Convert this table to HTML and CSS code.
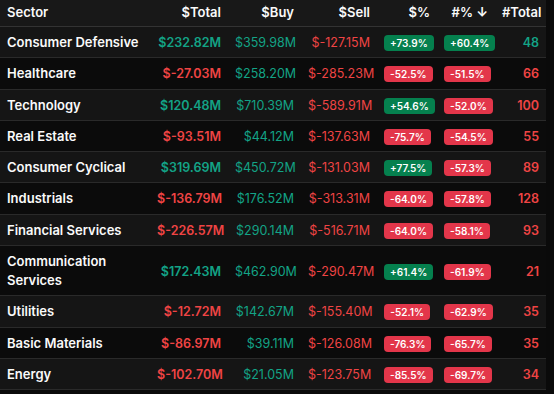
FILE: index.html
```html
<!DOCTYPE html>
<html lang="en">
<head>
  <meta charset="UTF-8" />
  <meta name="viewport" content="width=device-width, initial-scale=1.0"/>
  <title>Sectors</title>
  <link rel="stylesheet" href="styles.css">
</head>
<body>
  <table class="sector-table">
    <colgroup>
      <col class="w-name">
      <col class="w-total">
      <col class="w-buy">
      <col class="w-sell">
      <col class="w-pct">
      <col class="w-cpct">
      <col class="w-count">
    </colgroup>
    <thead>
      <tr>
        <th class="col-name">Sector</th>
        <th>$Total</th>
        <th>$Buy</th>
        <th>$Sell</th>
        <th>$%</th>
        <th>#% <span class="arrow">&#8595;</span></th>
        <th>#Total</th>
      </tr>
    </thead>
    <tbody>
      <tr>
        <td class="col-name">Consumer Defensive</td>
        <td class="total up">$232.82M</td>
        <td class="up">$359.98M</td>
        <td class="down">$-127.15M</td>
        <td><span class="badge up">+73.9%</span></td>
        <td><span class="badge up">+60.4%</span></td>
        <td class="count up">48</td>
      </tr>
      <tr>
        <td class="col-name">Healthcare</td>
        <td class="total down">$-27.03M</td>
        <td class="up">$258.20M</td>
        <td class="down">$-285.23M</td>
        <td><span class="badge down">-52.5%</span></td>
        <td><span class="badge down">-51.5%</span></td>
        <td class="count down">66</td>
      </tr>
      <tr>
        <td class="col-name">Technology</td>
        <td class="total up">$120.48M</td>
        <td class="up">$710.39M</td>
        <td class="down">$-589.91M</td>
        <td><span class="badge up">+54.6%</span></td>
        <td><span class="badge down">-52.0%</span></td>
        <td class="count down">100</td>
      </tr>
      <tr>
        <td class="col-name">Real Estate</td>
        <td class="total down">$-93.51M</td>
        <td class="up">$44.12M</td>
        <td class="down">$-137.63M</td>
        <td><span class="badge down">-75.7%</span></td>
        <td><span class="badge down">-54.5%</span></td>
        <td class="count down">55</td>
      </tr>
      <tr>
        <td class="col-name">Consumer Cyclical</td>
        <td class="total up">$319.69M</td>
        <td class="up">$450.72M</td>
        <td class="down">$-131.03M</td>
        <td><span class="badge up">+77.5%</span></td>
        <td><span class="badge down">-57.3%</span></td>
        <td class="count down">89</td>
      </tr>
      <tr>
        <td class="col-name">Industrials</td>
        <td class="total down">$-136.79M</td>
        <td class="up">$176.52M</td>
        <td class="down">$-313.31M</td>
        <td><span class="badge down">-64.0%</span></td>
        <td><span class="badge down">-57.8%</span></td>
        <td class="count down">128</td>
      </tr>
      <tr>
        <td class="col-name">Financial Services</td>
        <td class="total down">$-226.57M</td>
        <td class="up">$290.14M</td>
        <td class="down">$-516.71M</td>
        <td><span class="badge down">-64.0%</span></td>
        <td><span class="badge down">-58.1%</span></td>
        <td class="count down">93</td>
      </tr>
      <tr>
        <td class="col-name">Communication Services</td>
        <td class="total up">$172.43M</td>
        <td class="up">$462.90M</td>
        <td class="down">$-290.47M</td>
        <td><span class="badge up">+61.4%</span></td>
        <td><span class="badge down">-61.9%</span></td>
        <td class="count down">21</td>
      </tr>
      <tr>
        <td class="col-name">Utilities</td>
        <td class="total down">$-12.72M</td>
        <td class="up">$142.67M</td>
        <td class="down">$-155.40M</td>
        <td><span class="badge down">-52.1%</span></td>
        <td><span class="badge down">-62.9%</span></td>
        <td class="count down">35</td>
      </tr>
      <tr>
        <td class="col-name">Basic Materials</td>
        <td class="total down">$-86.97M</td>
        <td class="up">$39.11M</td>
        <td class="down">$-126.08M</td>
        <td><span class="badge down">-76.3%</span></td>
        <td><span class="badge down">-65.7%</span></td>
        <td class="count down">35</td>
      </tr>
      <tr>
        <td class="col-name">Energy</td>
        <td class="total down">$-102.70M</td>
        <td class="up">$21.05M</td>
        <td class="down">$-123.75M</td>
        <td><span class="badge down">-85.5%</span></td>
        <td><span class="badge down">-69.7%</span></td>
        <td class="count down">34</td>
      </tr>
    </tbody>
  </table>
</body>
</html>
```

FILE: styles.css
```css
body {
  background-color: #0a0a0a;
  font-family: "Inter", sans-serif;
  margin: 0;
  padding: 0;
  color: #fafafa;
}

.sector-table {
  width: 546px;
  table-layout: fixed;
  border-collapse: collapse;
  font-size: 12.5px;
  line-height: 19px;
}

.w-name { width: 150px; }
.w-total { width: 78px; }
.w-buy { width: 73px; }
.w-sell { width: 76px; }
.w-pct { width: 60px; }
.w-cpct { width: 58px; }
.w-count { width: 51px; }

.sector-table th {
  background-color: #181818;
  font-size: 13px;
  font-weight: 600;
  text-align: right;
  padding: 3px 7px 4px 7px;
  border-bottom: 1px solid #333;
  white-space: nowrap;
}

.sector-table td {
  text-align: right;
  padding: 6px 7px 5.3px 7px;
  border-bottom: 1px solid #2a2a2a;
  white-space: nowrap;
}

.sector-table tbody tr:nth-child(odd) {
  background-color: #151515;
}

.sector-table tbody tr:nth-child(even) {
  background-color: #0b0b0b;
}

.sector-table .col-name {
  text-align: left;
  font-size: 13px;
  font-weight: 600;
  white-space: normal;
}

.sector-table th.col-name {
  white-space: nowrap;
}

.arrow {
  font-weight: 700;
}

.up {
  color: #13a386;
}

.down {
  color: #ef4444;
}

.total,
.count {
  font-weight: 600;
}

.badge {
  display: inline-block;
  font-size: 10px;
  font-weight: 600;
  line-height: 16px;
  padding: 0 6px;
  border-radius: 4px;
  color: #fff;
}

.badge.up {
  background-color: #05804e;
}

.badge.down {
  background-color: #e3364a;
}
```
